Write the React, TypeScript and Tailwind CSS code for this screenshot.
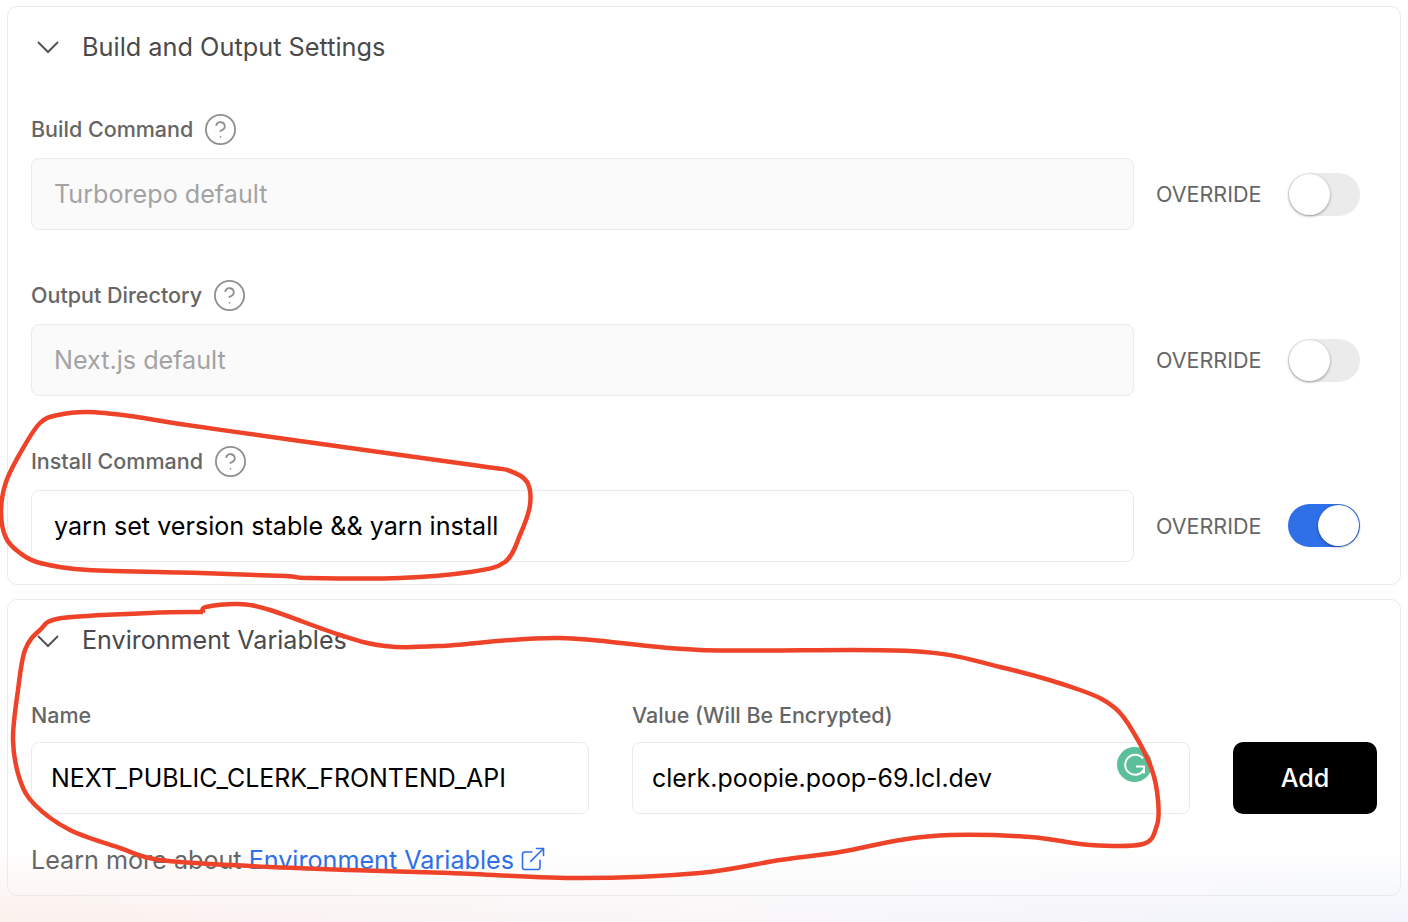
import { CircleHelp, ExternalLink } from 'lucide-react'

type Point = [number, number]

const installLoop: Point[] = [
  [300, 441], [180, 424], [130, 416], [88, 412], [58, 415], [40, 423], [22, 450], [6, 482], [1, 512],
  [6, 538], [20, 553], [40, 563], [88, 570], [200, 573], [285, 576], [308, 578], [400, 578], [470, 572],
  [505, 562], [520, 535], [530, 505], [527, 482], [510, 471], [480, 466], [300, 441],
]

const envLoop: Point[] = [
  [203, 612], [206, 607], [238, 604], [270, 610], [340, 635], [385, 646], [440, 646], [560, 638], [700, 650],
  [910, 651], [1000, 667], [1080, 690], [1115, 708], [1135, 735], [1152, 770], [1158, 800],
  [1157, 825], [1143, 844], [1090, 845], [1030, 837], [950, 835], [900, 840], [840, 852], [780, 860],
  [700, 873], [580, 878], [450, 873], [350, 870], [250, 866], [160, 860], [120, 848], [70, 830],
  [35, 805], [20, 780], [13, 740], [18, 690], [25, 650], [40, 630], [62, 618], [150, 613], [203, 612],
]

function smoothPath(pts: Point[]) {
  let d = `M${pts[0][0]} ${pts[0][1]}`
  for (let i = 0; i < pts.length - 1; i++) {
    const p0 = pts[Math.max(i - 1, 0)]
    const p1 = pts[i]
    const p2 = pts[i + 1]
    const p3 = pts[Math.min(i + 2, pts.length - 1)]
    const c1x = p1[0] + (p2[0] - p0[0]) / 6
    const c1y = p1[1] + (p2[1] - p0[1]) / 6
    const c2x = p2[0] - (p3[0] - p1[0]) / 6
    const c2y = p2[1] - (p3[1] - p1[1]) / 6
    d += ` C${c1x} ${c1y} ${c2x} ${c2y} ${p2[0]} ${p2[1]}`
  }
  return d
}

function Chevron() {
  return (
    <svg width="24" height="14" viewBox="0 0 24 14" fill="none" className="shrink-0">
      <path d="M2 2l10 10L22 2" stroke="#555" strokeWidth="2" />
    </svg>
  )
}

function Toggle({ on }: { on?: boolean }) {
  return (
    <div
      className={`flex h-[43px] w-[72px] items-center rounded-full p-px ${
        on ? 'justify-end bg-[#2f6fe8]' : 'justify-start bg-[#ebebeb]'
      }`}
    >
      <div className="size-[41px] rounded-full bg-white shadow-[0_1px_3px_rgba(0,0,0,0.4)]" />
    </div>
  )
}

function CommandField({
  label,
  value,
  placeholder,
  on,
}: {
  label: string
  value?: string
  placeholder?: string
  on?: boolean
}) {
  return (
    <div>
      <div className="flex h-[30px] items-center gap-[10px] text-[21.5px] font-medium text-[#666]">
        {label}
        <CircleHelp size={35} strokeWidth={1.25} className="text-[#8f8f8f]" />
      </div>
      <div className="mt-3.5 flex items-center">
        <div
          className={`flex h-[72px] w-[1103px] items-center rounded-lg border border-[#ebebeb] px-[22px] pt-px text-[25.15px] ${
            value ? 'text-black' : 'bg-[#fafafa] text-[#a3a3a3]'
          }`}
        >
          {value ?? placeholder}
        </div>
        <span className="ml-[22px] w-[106px] text-[21.5px] text-[#666]">OVERRIDE</span>
        <div className={`ml-[26px] ${on ? '-translate-y-px' : ''}`}>
          <Toggle on={on} />
        </div>
      </div>
    </div>
  )
}

function EnvInput({ label, value, grammarly }: { label: string; value: string; grammarly?: boolean }) {
  return (
    <div className="w-[558px]">
      <div className="text-[21.5px] leading-[30px] font-medium text-[#666]">{label}</div>
      <div className="relative mt-3 flex h-[72px] items-center rounded-lg border border-[#ebebeb] px-[19px] pt-px text-[24.95px] text-black">
        {value}
        {grammarly && (
          <svg width="35" height="35" viewBox="0 0 35 35" className="absolute top-[4px] left-[484px]">
            <circle cx="17.5" cy="17.5" r="17.5" fill="#5bc09a" />
            <path
              d="M26 11.5a10 10 0 1 0 1 11M19 19.5h8v7"
              fill="none"
              stroke="#fff"
              strokeWidth="2"
            />
          </svg>
        )}
      </div>
    </div>
  )
}

export default function App() {
  return (
    <div
      className="relative h-[922px] overflow-hidden bg-[linear-gradient(to_bottom,#fff_92%,rgba(255,255,255,0)_100%),linear-gradient(to_right,#fbf0ec,#f9f6f8_50%,#f1f4fb)] px-[7px] pt-[6px] font-['Inter',sans-serif]"
    >
      {/* Build settings */}
      <section className="h-[579px] rounded-[10px] border border-[#ebebeb] px-[23px]">
        <div className="ml-[5px] flex h-[80px] items-center gap-[22px] text-[25.3px] text-[#4a4a4a]">
          <Chevron />
          Build and Output Settings
        </div>
        <div className="mt-[27px] flex flex-col gap-[50px]">
          <CommandField label="Build Command" placeholder="Turborepo default" />
          <CommandField label="Output Directory" placeholder="Next.js default" />
          <CommandField label="Install Command" value="yarn set version stable && yarn install" on />
        </div>
      </section>

      {/* Env vars */}
      <section className="mt-[14px] h-[297px] rounded-[10px] border border-[#ebebeb] px-[23px]">
        <div className="ml-[5px] flex h-[82px] items-center gap-[22px] text-[25.1px] text-[#4a4a4a]">
          <Chevron />
          Environment Variables
        </div>
        <div className="mt-[18px] flex items-end">
          <EnvInput label="Name" value="NEXT_PUBLIC_CLERK_FRONTEND_API" />
          <div className="ml-[43px]">
            <EnvInput label="Value (Will Be Encrypted)" value="clerk.poopie.poop-69.lcl.dev" grammarly />
          </div>
          <button className="ml-[43px] h-[72px] w-[144px] rounded-[10px] bg-black pt-px text-[25.15px] font-medium text-white">
            Add
          </button>
        </div>
        <div className="mt-[28px] flex items-center text-[25.15px] leading-[36px] text-[#666]">
          Learn more about&nbsp;
          <span className="text-[#2f6fe8]">Environment Variables</span>
          <ExternalLink size={28} strokeWidth={1.35} className="ml-[5px] -translate-y-px text-[#2f6fe8]" />
        </div>
      </section>

      {/* Hand-drawn marks */}
      <svg width="1408" height="922" className="pointer-events-none absolute top-0 left-0" fill="none">
        <path d={smoothPath(installLoop)} stroke="#ee4328" strokeWidth="4.5" />
        <path d={smoothPath(envLoop)} stroke="#ee4328" strokeWidth="4.5" />
      </svg>
    </div>
  )
}
